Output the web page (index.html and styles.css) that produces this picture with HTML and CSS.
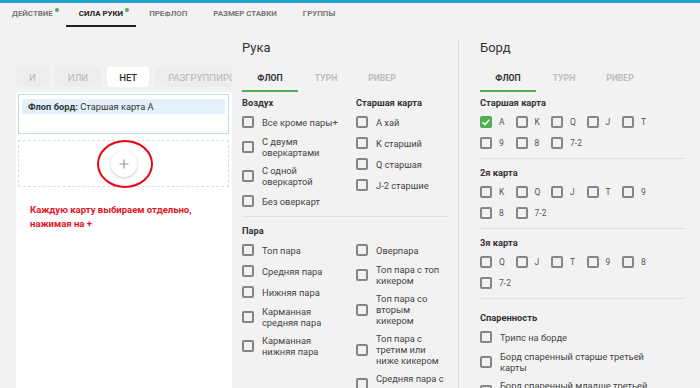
FILE: index.html
```html
<!DOCTYPE html>
<html lang="ru">
<head>
  <meta charset="UTF-8" />
  <meta name="viewport" content="width=device-width, initial-scale=1.0"/>
  <title>Сила руки</title>
  <link rel="stylesheet" href="styles.css">
</head>
<body>

<div class="topbar"></div>

<!-- main tabs -->
<nav class="nav">
  <a class="nav-tab">Действие<span class="dot"></span></a>
  <a class="nav-tab active">Сила руки<span class="dot"></span></a>
  <a class="nav-tab">Префлоп</a>
  <a class="nav-tab">Размер ставки</a>
  <a class="nav-tab">Группы</a>
</nav>

<main class="layout">

  <!-- filter builder -->
  <section class="filter-col">
    <div class="logic">
      <button class="logic-btn">И</button>
      <button class="logic-btn">Или</button>
      <button class="logic-btn active">Нет</button>
      <button class="logic-btn">Разгруппировать</button>
    </div>
    <div class="filter-panel">
      <div class="rule-box">
        <div class="rule"><b>Флоп борд:</b> Старшая карта A</div>
      </div>
      <div class="add-box">
        <button class="add-btn">
          <svg width="10" height="10" viewBox="0 0 10 10"><path d="M5 0.5v9M0.5 5h9" stroke="#9a9a9a" stroke-width="1.2"/></svg>
        </button>
        <span class="mark-ring"></span>
      </div>
      <p class="note">Каждую карту выбираем отдельно, нажимая на +</p>
    </div>
  </section>

  <!-- hand -->
  <section class="hand-col">
    <h2 class="col-title">Рука</h2>
    <div class="streets">
      <span class="street active">Флоп</span>
      <span class="street">Турн</span>
      <span class="street">Ривер</span>
    </div>

    <div class="group two-cols">
      <div class="sub">
        <h3 class="group-title">Воздух</h3>
        <div class="check-list">
          <label class="check"><span class="box"></span><span>Все кроме пары+</span></label>
          <label class="check"><span class="box"></span><span>С двумя оверкартами</span></label>
          <label class="check"><span class="box"></span><span>С одной оверкартой</span></label>
          <label class="check"><span class="box"></span><span>Без оверкарт</span></label>
        </div>
      </div>
      <div class="sub">
        <h3 class="group-title">Старшая карта</h3>
        <div class="check-list">
          <label class="check"><span class="box"></span><span>A хай</span></label>
          <label class="check"><span class="box"></span><span>K старший</span></label>
          <label class="check"><span class="box"></span><span>Q старшая</span></label>
          <label class="check"><span class="box"></span><span>J-2 старшие</span></label>
        </div>
      </div>
    </div>

    <div class="group two-cols">
      <div class="sub">
        <h3 class="group-title">Пара</h3>
        <div class="check-list">
          <label class="check"><span class="box"></span><span>Топ пара</span></label>
          <label class="check"><span class="box"></span><span>Средняя пара</span></label>
          <label class="check"><span class="box"></span><span>Нижняя пара</span></label>
          <label class="check"><span class="box"></span><span>Карманная средняя пара</span></label>
          <label class="check"><span class="box"></span><span>Карманная нижняя пара</span></label>
        </div>
      </div>
      <div class="sub">
        <h3 class="group-title">&nbsp;</h3>
        <div class="check-list">
          <label class="check"><span class="box"></span><span>Оверпара</span></label>
          <label class="check"><span class="box"></span><span>Топ пара с топ кикером</span></label>
          <label class="check"><span class="box"></span><span>Топ пара со вторым кикером</span></label>
          <label class="check"><span class="box"></span><span>Топ пара с третим или ниже кикером</span></label>
          <label class="check"><span class="box"></span><span>Средняя пара с топ кикером</span></label>
          <label class="check"><span class="box"></span><span>Средняя пара с вторым кикером</span></label>
        </div>
      </div>
    </div>
  </section>

  <!-- board -->
  <section class="board-col">
    <h2 class="col-title">Борд</h2>
    <div class="streets">
      <span class="street active">Флоп</span>
      <span class="street">Турн</span>
      <span class="street">Ривер</span>
    </div>

    <div class="group">
      <h3 class="group-title">Старшая карта</h3>
      <div class="cards">
        <label class="check card"><span class="box checked">
          <svg width="12" height="12" viewBox="0 0 12 12"><path d="M2.6 6.2l2.3 2.3 4.5-4.8" fill="none" stroke="#fff" stroke-width="1.6"/></svg>
        </span><span>A</span></label>
        <label class="check card"><span class="box"></span><span>K</span></label>
        <label class="check card"><span class="box"></span><span>Q</span></label>
        <label class="check card"><span class="box"></span><span>J</span></label>
        <label class="check card"><span class="box"></span><span>T</span></label>
        <label class="check card"><span class="box"></span><span>9</span></label>
        <label class="check card"><span class="box"></span><span>8</span></label>
        <label class="check card"><span class="box"></span><span>7-2</span></label>
      </div>
    </div>

    <div class="group">
      <h3 class="group-title">2я карта</h3>
      <div class="cards">
        <label class="check card"><span class="box"></span><span>K</span></label>
        <label class="check card"><span class="box"></span><span>Q</span></label>
        <label class="check card"><span class="box"></span><span>J</span></label>
        <label class="check card"><span class="box"></span><span>T</span></label>
        <label class="check card"><span class="box"></span><span>9</span></label>
        <label class="check card"><span class="box"></span><span>8</span></label>
        <label class="check card"><span class="box"></span><span>7-2</span></label>
      </div>
    </div>

    <div class="group">
      <h3 class="group-title">3я карта</h3>
      <div class="cards">
        <label class="check card"><span class="box"></span><span>Q</span></label>
        <label class="check card"><span class="box"></span><span>J</span></label>
        <label class="check card"><span class="box"></span><span>T</span></label>
        <label class="check card"><span class="box"></span><span>9</span></label>
        <label class="check card"><span class="box"></span><span>8</span></label>
        <label class="check card"><span class="box"></span><span>7-2</span></label>
      </div>
    </div>

    <div class="group group-wide">
      <h3 class="group-title">Спаренность</h3>
      <div class="check-list pair-list">
        <label class="check"><span class="box"></span><span>Трипс на борде</span></label>
        <label class="check"><span class="box"></span><span>Борд спаренный старше третьей карты</span></label>
        <label class="check"><span class="box"></span><span>Борд спаренный младше третьей карты</span></label>
      </div>
    </div>
  </section>

</main>

</body>
</html>
```

FILE: styles.css
```css
html, body {
  height: 100%;
  overflow: hidden;
}
body {
  margin: 0;
  font-family: Roboto, "Noto Sans", sans-serif;
  background: #f2f2f2;
  color: #333;
}

/* top */
.topbar {
  height: 3px;
  background: #1fa3cd;
}
.nav {
  display: flex;
}
.nav-tab {
  position: relative;
  padding: 0 13px;
  height: 22px;
  line-height: 22px;
  font-size: 7.9px;
  font-weight: 700;
  text-transform: uppercase;
  color: #777;
  border-bottom: 2px solid transparent;
}
.nav-tab:first-child {
  margin-left: -1px;
}
.nav-tab.active {
  color: #222;
  border-bottom-color: #222;
}
.dot {
  position: absolute;
  right: 7px;
  top: 5px;
  width: 4px;
  height: 4px;
  border-radius: 50%;
  background: #4caf50;
}

.layout {
  display: flex;
  height: calc(100% - 27px);
  padding-top: 13px;
  box-sizing: border-box;
}

/* left filter builder */
.filter-col {
  width: 216px;
  margin-left: 16px;
  display: flex;
  flex-direction: column;
  flex-shrink: 0;
}
.logic {
  display: flex;
  gap: 6px;
  margin-top: 27px;
  overflow: hidden;
  height: 20px;
}
.logic-btn {
  flex-shrink: 0;
  height: 20px;
  padding: 0 13px;
  border: none;
  border-radius: 2px;
  background: #ededed;
  color: #b5b5b5;
  font-family: Roboto, sans-serif;
  font-size: 9.5px;
  text-transform: uppercase;
}
.logic-btn.active {
  padding: 0 12px;
  background: #fff;
  color: #333;
  font-weight: 500;
  box-shadow: 0 1px 1px rgba(0, 0, 0, 0.06);
}
.filter-panel {
  flex: 1;
  margin-top: 5px;
  background: #fff;
  padding: 2px 3px 0 2px;
}
.rule-box {
  height: 40px;
  box-sizing: border-box;
  border: 1px solid #bcdcf0;
  padding: 4px 3px;
}
.rule {
  height: 15px;
  line-height: 15px;
  padding-left: 6px;
  font-size: 9.3px;
  background: #e3f1fb;
  color: #333;
}
.add-box {
  position: relative;
  margin-top: 6px;
  height: 45px;
  border: 1px dashed #dedede;
  display: flex;
  align-items: center;
  justify-content: center;
}
.add-btn {
  width: 26px;
  height: 26px;
  border-radius: 50%;
  border: none;
  background: #fff;
  box-shadow: 0 1px 3px rgba(0, 0, 0, 0.22);
  padding: 0;
  display: flex;
  align-items: center;
  justify-content: center;
}
.mark-ring {
  position: absolute;
  left: 78px;
  top: -1px;
  width: 56px;
  height: 48px;
  box-sizing: border-box;
  border: 2px solid #e30613;
  border-radius: 50%;
}
.note {
  margin: 16px 0 0 12px;
  max-width: 190px;
  font-size: 9.5px;
  line-height: 14px;
  font-weight: 700;
  color: #e3141f;
}

/* hand + board columns */
.hand-col {
  width: 206px;
  margin-left: 10px;
  flex-shrink: 0;
}
.board-col {
  width: 205px;
  margin-left: 10px;
  padding-left: 21px;
  border-left: 1px solid #dcdcdc;
  flex-shrink: 0;
}
.col-title {
  margin: 0 0 10px;
  font-size: 13px;
  line-height: 16px;
  font-weight: 400;
  color: #333;
}
.streets {
  display: flex;
}
.street {
  width: 56px;
  height: 24px;
  line-height: 24px;
  text-align: center;
  font-size: 8.7px;
  font-weight: 700;
  text-transform: uppercase;
  color: #bdbdbd;
  border-bottom: 2px solid transparent;
}
.street.active {
  color: #333;
  border-bottom-color: #4caf50;
}

.group {
  padding: 8px 0;
}
.streets + .group {
  padding-top: 5px;
}
.group + .group {
  border-top: 1px solid #e0e0e0;
}
.group-wide {
  padding-top: 13px;
}
.group-title {
  margin: 0 0 6px;
  font-size: 9.3px;
  line-height: 12px;
  font-weight: 700;
  color: #333;
}
.two-cols {
  display: grid;
  grid-template-columns: 114px 1fr;
}
.two-cols .sub:first-child {
  padding-right: 14px;
}
.check-list {
  display: flex;
  flex-direction: column;
  gap: 7px;
}
.check {
  display: flex;
  align-items: center;
  gap: 8px;
  min-height: 14px;
  font-size: 9.3px;
  line-height: 11px;
  color: #444;
}
.box {
  width: 12px;
  height: 12px;
  box-sizing: border-box;
  border: 2px solid #858585;
  border-radius: 2px;
  flex-shrink: 0;
}
.box.checked {
  border: none;
  background: #4caf50;
}
.box svg {
  display: block;
}
.cards {
  display: grid;
  grid-template-columns: repeat(5, 35.5px);
  row-gap: 7px;
}
.card {
  gap: 7px;
  font-size: 8.5px;
  color: #555;
}
.pair-list .check span:last-child {
  max-width: 160px;
}
```
